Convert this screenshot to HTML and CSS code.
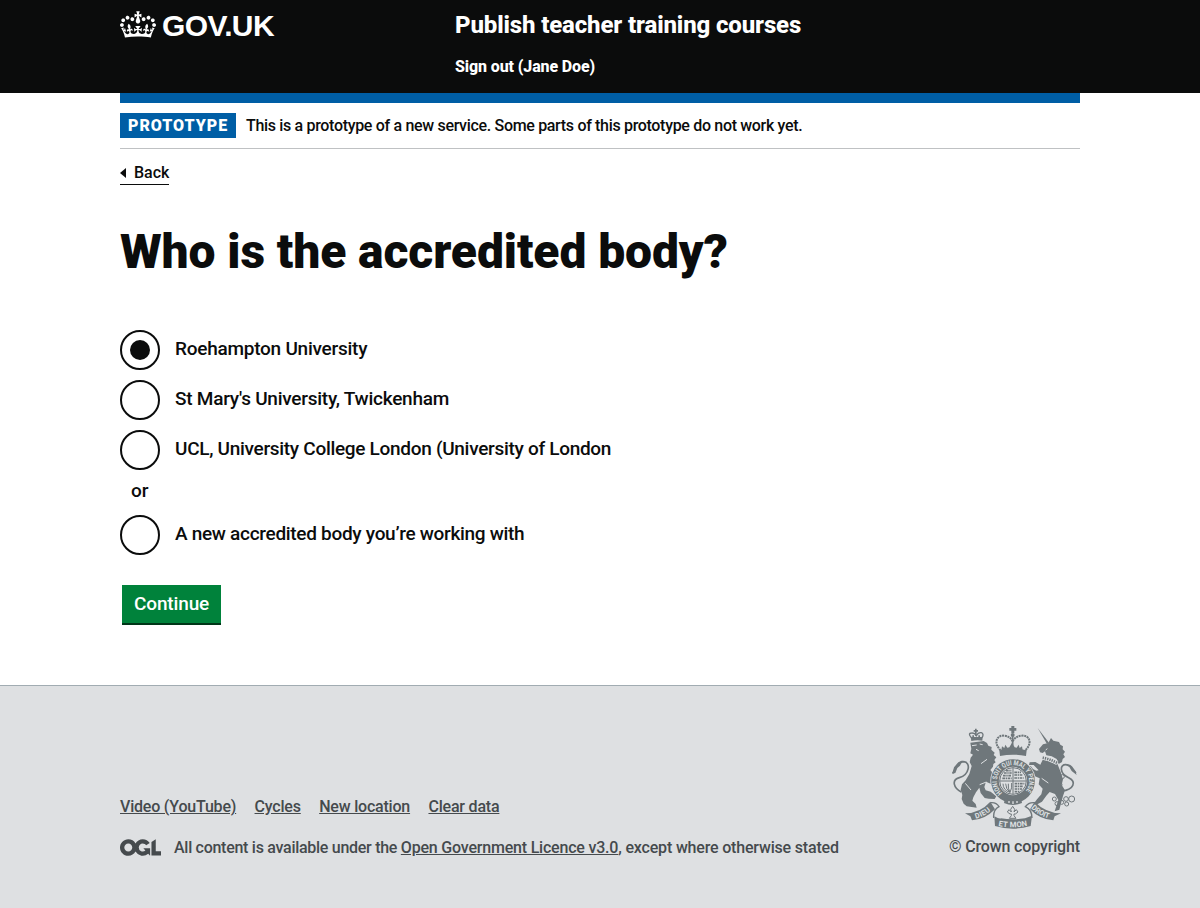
FILE: index.html
```html
<!DOCTYPE html>
<html lang="en">
<head>
<meta charset="utf-8">
<title>Who is the accredited body?</title>
<link rel="stylesheet" href="styles.css">
</head>
<body>
<header class="header">
  <div class="container header-inner">
    <a class="logo" href="#">
      <svg class="crown" viewBox="0 0 132 97" width="36" height="27" aria-hidden="true"><path fill="#fff" d="M25 30.2c3.5 1.5 7.7-.2 9.1-3.7 1.5-3.6-.2-7.8-3.9-9.2-3.6-1.4-7.6.3-9.1 3.9-1.4 3.5.3 7.5 3.9 9zM9 39.5c3.6 1.5 7.8-.2 9.2-3.7 1.5-3.6-.2-7.8-3.9-9.1-3.6-1.5-7.6.2-9.1 3.8-1.4 3.5.3 7.5 3.8 9zM4.4 57.2c3.5 1.5 7.7-.2 9.1-3.8 1.5-3.6-.2-7.7-3.9-9.1-3.5-1.5-7.6.3-9.1 3.8-1.4 3.5.3 7.6 3.9 9.1zm38.3-21.4c3.5 1.5 7.7-.2 9.1-3.8 1.5-3.6-.2-7.7-3.9-9.1-3.6-1.5-7.6.3-9.1 3.8-1.3 3.6.4 7.7 3.9 9.1zm64.4-5.6c-3.6 1.5-7.8-.2-9.1-3.7-1.5-3.6.2-7.8 3.8-9.2 3.6-1.4 7.7.3 9.2 3.9 1.3 3.5-.4 7.5-3.9 9zm15.9 9.3c-3.6 1.5-7.7-.2-9.1-3.7-1.5-3.6.2-7.8 3.7-9.1 3.6-1.5 7.7.2 9.2 3.8 1.5 3.5-.3 7.5-3.8 9zm4.7 17.7c-3.6 1.5-7.8-.2-9.2-3.8-1.5-3.6.2-7.7 3.9-9.1 3.6-1.5 7.7.3 9.2 3.8 1.3 3.5-.4 7.6-3.9 9.1zM89.3 35.8c-3.6 1.5-7.8-.2-9.2-3.8-1.4-3.6.2-7.7 3.9-9.1 3.6-1.5 7.7.3 9.2 3.8 1.4 3.6-.3 7.7-3.9 9.1zM69.7 17.7l8.9 4.7V9.3l-8.9 2.8c-.2-.3-.5-.6-.9-.9L72.4 0H59.6l3.5 11.2c-.3.3-.6.5-.9.9l-8.8-2.8v13.1l8.8-4.7c.3.3.6.7.9.9l-5 15.4v.1c-.2.8-.4 1.6-.4 2.4 0 4.1 3.1 7.5 7 8.1h.2c.3 0 .7.1 1 .1.4 0 .7 0 1-.1h.2c4-.6 7.1-4.1 7.1-8.1 0-.8-.1-1.7-.4-2.4V34l-5.1-15.4c.4-.2.7-.6 1-.9zM66 92.8c16.9 0 32.8 1.1 47.1 3.2 4-16.9 8.9-26.7 14-33.5l-9.6-3.4c1 4.9 1.1 7.2 0 10.2-1.5-1.4-3-4.3-4.2-8.7L108.6 76c2.8-2 5-3.2 7.5-3.3-4.4 9.4-10 11.9-13.6 11.2-4.3-.8-6.3-4.6-5.6-7.9 1-4.7 5.7-5.9 8-.5 4.3-8.7-3-11.4-7.6-8.8 7.1-7.2 7.9-13.5 2.1-21.1-8 6.1-8.1 12.3-4.5 20.8-4.7-5.4-12.1-2.5-9.5 6.2 3.4-5.2 7.9-2 7.2 3.1-.6 4.3-6.4 7.8-13.5 7.2-10.3-.9-10.9-8-11.2-13.8 2.5-.5 7.1 1.8 11 7.3L80.2 60c-4.1 4.4-8 5.3-12.3 5.4 1.4-4.4 8-11.6 8-11.6H55.5s6.4 7.2 7.9 11.6c-4.2-.1-8-1-12.3-5.4l1.4 16.4c3.9-5.5 8.5-7.7 10.9-7.3-.3 5.8-.9 12.8-11.1 13.8-7.2.6-12.9-2.9-13.5-7.2-.7-5 3.8-8.3 7.1-3.1 2.7-8.7-4.6-11.6-9.4-6.2 3.7-8.5 3.6-14.7-4.6-20.8-5.8 7.6-5 13.9 2.2 21.1-4.7-2.6-11.9.1-7.7 8.8 2.3-5.5 7.1-4.2 8.1.5.7 3.3-1.3 7.1-5.7 7.9-3.5.7-9-1.8-13.5-11.2 2.5.1 4.7 1.3 7.5 3.3l-4.7-15.4c-1.2 4.4-2.7 7.2-4.3 8.7-1.1-3-.9-5.3 0-10.2l-9.5 3.4c5 6.9 9.9 16.7 14 33.5 14.8-2.1 30.8-3.2 47.7-3.2z"/></svg>
      <span class="logo-text">GOV.UK</span>
    </a>
    <div class="header-content">
      <a class="service" href="#">Publish teacher training courses</a>
      <a class="signout" href="#">Sign out (Jane Doe)</a>
    </div>
  </div>
</header>
<div class="container">
  <div class="bar"></div>
  <div class="phase">
    <strong class="tag">PROTOTYPE</strong>
    <span class="phase-text">This is a prototype of a new service. Some parts of this prototype do not work yet.</span>
  </div>
  <a class="back" href="#"><svg width="6" height="10" viewBox="0 0 6 10" aria-hidden="true"><path d="M6 0v10L0 5z" fill="#0b0c0c"/></svg>Back</a>
  <main>
    <h1>Who is the accredited body?</h1>
    <form class="radios">
      <label class="radio"><span class="dot on"></span><span class="label">Roehampton University</span></label>
      <label class="radio"><span class="dot"></span><span class="label">St Mary's University, Twickenham</span></label>
      <label class="radio"><span class="dot"></span><span class="label label-long">UCL, University College London (University of London</span></label>
      <p class="or">or</p>
      <label class="radio"><span class="dot"></span><span class="label label-long">A new accredited body you’re working with</span></label>
      <button class="button" type="button">Continue</button>
    </form>
  </main>
</div>
<footer class="footer">
  <div class="container footer-inner">
    <div class="footer-meta">
      <nav class="links">
        <a href="#">Video (YouTube)</a>
        <a href="#">Cycles</a>
        <a href="#">New location</a>
        <a href="#">Clear data</a>
      </nav>
      <div class="licence">
        <svg class="ogl" viewBox="0 0 483.2 195.7" width="41" height="17" aria-label="Open Government Licence"><path fill="#454a4d" d="M421.5 142.8V.1l-50.7 32.3v161.1h112.4v-50.7zm-122.3-9.6A47.12 47.12 0 0 1 221 97.8c0-26 21.1-47.1 47.1-47.1 16.7 0 31.4 8.7 39.7 21.8l42.7-27.2A97.63 97.63 0 0 0 268.1 0c-36.5 0-68.3 20.1-85.1 49.7A98 98 0 0 0 97.8 0C43.9 0 0 43.9 0 97.8s43.9 97.8 97.8 97.8c36.5 0 68.3-20.1 85.1-49.7a97.76 97.76 0 0 0 149.6 25.4l19.4 22.2h3v-87.8h-80l24.3 27.5zM97.8 145c-26 0-47.1-21.1-47.1-47.1s21.1-47.1 47.1-47.1 47.1 21.1 47.1 47.1S123.8 145 97.8 145"/></svg>
        <span class="licence-text">All content is available under the <a href="#">Open Government Licence v3.0</a><span class="licence-end">, except where otherwise stated</span></span>
      </div>
    </div>
    <a class="copyright" href="#">
      <svg class="arms" viewBox="30 30 384 315" width="128" height="105" aria-hidden="true">
        <g fill="#6f777b">
          <!-- central crown -->
          <path d="M214 33h9v6h6v8h-6v7h-9v-7h-6v-8h6z"/>
          <circle cx="218" cy="60" r="6"/>
          <path d="M178 106q40-10 82 0l-2 17q-39-8-78 0z"/>
          <path d="M184 106l2-12 7 5 3-10 6 9 6-1 8-14 8 14 6 1 6-9 3 10 7-5 2 12z"/>
          <path d="M182 106C158 82 172 60 192 62Q212 64 218 80Q224 64 246 62C266 60 280 82 256 106" fill="none" stroke="#6f777b" stroke-width="6" stroke-dasharray="6 2"/>
          <path d="M218 62v30" stroke="#6f777b" stroke-width="5"/>
          <!-- lion -->
          <path d="M92 66l36 0-1 11q-17-3-33 1z"/>
          <path d="M94 68Q82 54 95 54Q104 53 109 62Q115 51 124 53Q133 57 126 68" fill="none" stroke="#6f777b" stroke-width="4"/>
          <path d="M105 41h5v4h4v5h-4v12h-5v-12h-4v-5h4zM97 68v-7h5v7zM115 68v-7h5v7z"/>
          <path d="M91 83l40-5 10 6 4 8 10 4-1 8 10 9-3 7 8 7-6 8 4 7-7 5-1 8-8 10 8 10 0 9 14 10 3 9 14 13-8 4-14-8-16-6-14-6-5 16 4 10 15 4 17 14-5 8-18-1-12-2-12-15-4-16-10 14-8 15-3 10 10 10 3 11-15-2-15-2-9-8-6-14 2-12-5-16 4-16 11-12 11-19 7-24-6-12 3-13 7-9-8-4 3-14z"/>
          <path d="M64 231C40 218 34 195 58 188C88 180 94 142 71 140C54 141 49 157 38 175" fill="none" stroke="#6f777b" stroke-width="5"/>
          <path d="M37 176l5-19 13-15 13-6-8 16-8 7-6 15z"/>
          <!-- unicorn -->
          <path d="M293 39l34 44-6 4z"/>
          <path d="M325 84l8-15 7 8 17 4 4 8 8 5-1 9 7 7-5 8 5 8-7 6-2 9-10 6-6-15-15-8-16-3-4-12-7 5-8-2-3-10 12-14z"/>
          <path d="M309 133l43 13 10 25 7 22-4 17 10 16-6 17-5 18-6 23-14 5 5-16 6-18-10-18-16-6-10 11-13 18-14 8-11-2 10-13 13-15 4-17-12-13 3-18-16-7-10-14-10-13 9-3 7 9 10 5 7-1-15-16-14 0 2-8 17-1 15 8z"/>
          <path d="M365 228C402 224 410 200 386 188C358 176 358 147 379 149C397 150 396 162 408 174" fill="none" stroke="#6f777b" stroke-width="5"/>
          <path d="M373 148q29 2 37 32l-15-12-7-12z"/>
        </g>
        <path d="M308 128q21 4 44 16" stroke="#dee0e2" stroke-width="13" fill="none"/>
        <path d="M308 128q21 4 44 16" stroke="#6f777b" stroke-width="8" stroke-dasharray="4 3" fill="none"/>
        <path d="M96 92l14-2M119 87l9 2M108 103l8 4M76 205l17 20M123 146l18-13M119 209l20-8M305 190l20 14M322 101l-5 4" stroke="#dee0e2" stroke-width="3"/>
        <g fill="none" stroke="#6f777b" stroke-width="3">
          <circle cx="367" cy="185" r="6"/><circle cx="360" cy="209" r="6"/><circle cx="343" cy="252" r="6"/><circle cx="351" cy="266" r="6"/><circle cx="365" cy="262" r="6"/><circle cx="378" cy="252" r="7"/><circle cx="395" cy="252" r="9"/><circle cx="380" cy="267" r="6"/>
        </g>
        <!-- garter and shield -->
        <circle cx="219" cy="198" r="68" fill="#dee0e2"/>
        <circle cx="219" cy="198" r="54" fill="none" stroke="#6f777b" stroke-width="23"/>
        <path id="motto" d="M187 234A48 48 0 1 1 251 234" fill="none"/>
        <text class="arms-text" font-size="21"><textPath href="#motto" textLength="222" lengthAdjust="spacingAndGlyphs">HONI SOIT QUI MAL Y PENSE</textPath></text>
        <circle cx="219" cy="198" r="40" fill="#dee0e2" stroke="#6f777b" stroke-width="3"/>
        <path d="M219 158v79M180 198h78" stroke="#6f777b" stroke-width="3"/>
        <g stroke="#6f777b" stroke-width="5" stroke-dasharray="8 2 4 2">
          <path d="M192 174h23M189 182h26M187 190h28M198 167h17M223 172h20M223 180h26M223 189h28"/>
          <path d="M224 206h29M224 214h26M224 222h22M224 230h14"/>
        </g>
        <path d="M189 206q0 20 21 26q-7-12-5-26M197 206q0 16 13 26M215 204q2 15-5 28" fill="none" stroke="#6f777b" stroke-width="3"/>
        <path d="M195 250q24 11 48 0l3 14q-28 12-54 0z" fill="#6f777b"/>
        <path d="M207 258v6M219 259v8M231 258v6" stroke="#dee0e2" stroke-width="4"/>
        <!-- fleur and scroll -->
        <path d="M218 274l6 9-2 8 7-7 5 7-8 6h-4v5l6 8h-20l6-8v-5h-4l-8-6 5-7 7 7-2-8z" fill="none" stroke="#6f777b" stroke-width="3"/>
        <path d="M75 295Q121 294 151 260L165 283Q135 314 96 316L91 304zM363 295Q317 294 284 260L270 283Q300 314 340 316L344 304z" fill="#6f777b"/>
        <path d="M151 263q18-2 26 12q-18 9-16 34M284 263q-18-2-28 12q20 9 20 34" fill="none" stroke="#6f777b" stroke-width="4"/>
        <path d="M163 304q16 9 20 6q34 6 72 0l21-8-4 31q-53 16-107 0z" fill="#6f777b"/>
        <path id="dieu" d="M107 311Q137 304 160 279" fill="none"/>
        <path id="droit" d="M273 279Q300 306 336 312" fill="none"/>
        <path id="etmon" d="M172 332Q219 342 267 331" fill="none"/>
        <text class="arms-text" font-size="22"><textPath href="#dieu" textLength="52">DIEU</textPath></text>
        <text class="arms-text" font-size="22"><textPath href="#droit" textLength="62">DROIT</textPath></text>
        <text class="arms-text" font-size="23"><textPath href="#etmon" startOffset="3" textLength="88">ET MON</textPath></text>
      </svg>
      <span class="copyright-text">© Crown copyright</span>
    </a>
  </div>
</footer>
</body>
</html>
```
FILE: styles.css
```css
* { box-sizing: border-box; }
body { margin: 0; font-family: Roboto, "Liberation Sans", sans-serif; font-size: 19px; color: #0b0c0c; background: #fff; white-space: nowrap; }
a { color: inherit; text-decoration: none; }
.container { width: 960px; margin: 0 auto; }
.header { background: #0b0c0c; color: #fff; height: 93px; }
.header-inner { display: flex; }
.logo { width: 335px; display: flex; gap: 6px; padding-top: 11px; }
.logo-text { font: 700 30px/30px "Liberation Sans", Arial, sans-serif; letter-spacing: -0.6px; }
.header-content { display: flex; flex-direction: column; padding-top: 11px; font-weight: 800; }
.service { font-size: 24px; line-height: 29px; letter-spacing: -0.14px; }
.signout { font-size: 16px; line-height: 20px; margin-top: 17px; letter-spacing: -0.12px; }
.bar { height: 10px; background: #005ea5; }
.phase { display: flex; align-items: center; gap: 10px; padding: 10px 0; height: 46px; border-bottom: 1px solid #bfc1c3; font-size: 16px; font-weight: 500; }
.phase-text { letter-spacing: -0.325px; }
.tag { width: 116px; height: 25px; padding-left: 8px; background: #005ea5; color: #fff; font-weight: 900; line-height: 25px; letter-spacing: 1px; }
.back { display: inline-flex; align-items: center; gap: 8px; margin-top: 15px; height: 21px; padding-bottom: 3px; border-bottom: 1px solid #0b0c0c; font-size: 16px; font-weight: 500; line-height: 17px; }
h1 { margin: 42px 0 0; font-size: 48px; line-height: 50px; font-weight: 900; letter-spacing: -0.1px; }
.radios { margin-top: 53px; display: flex; flex-direction: column; align-items: flex-start; font-weight: 500; }
.radio { display: flex; align-items: center; gap: 15px; height: 40px; margin-bottom: 10px; }
.label { line-height: 36px; padding-bottom: 2px; letter-spacing: -0.25px; }
.label-long { letter-spacing: -0.3px; }
.dot { width: 40px; height: 40px; border: 2px solid #0b0c0c; border-radius: 50%; display: grid; place-items: center; }
.on::after { content: ""; width: 20px; height: 20px; border-radius: 50%; background: #0b0c0c; }
.or { margin: 0 0 14px 11px; line-height: 21px; }
.button { margin: 20px 0 0 2px; width: 99px; height: 40px; padding: 0 12px 2px; border: 0; background: #00823b; box-shadow: inset 0 -2px #003618; color: #fff; font: 500 19px/36px Roboto, sans-serif; letter-spacing: -0.14px; text-align: left; }
.footer { margin-top: 60px; height: 223px; background: #dee0e2; border-top: 1px solid #a1acb2; color: #454a4d; font-size: 16px; font-weight: 500; }
.footer-inner { display: flex; justify-content: space-between; padding-top: 39px; }
.footer-meta { padding-top: 72px; }
.links { display: flex; gap: 18.4px; line-height: 20px; letter-spacing: -0.2px; }
.links a, .licence a { text-decoration: underline; }
.licence { display: flex; align-items: center; gap: 13px; margin-top: 19px; line-height: 20px; }
.licence-text { letter-spacing: -0.28px; padding-top: 2px; }
.licence-text a { letter-spacing: -0.2px; }
.licence-end { letter-spacing: -0.18px; }
.copyright { display: flex; flex-direction: column; width: 131px; line-height: 20px; gap: 7px; }
.copyright-text { letter-spacing: -0.15px; }
.arms { margin-left: 1px; }
.arms-text { font-family: Roboto, sans-serif; font-weight: 700; fill: #dee0e2; }
```
